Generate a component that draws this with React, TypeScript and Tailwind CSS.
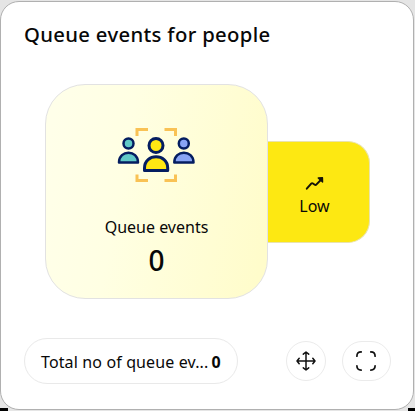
import React from "react";

function PeopleIcon() {
  return (
    <svg width="78" height="56" viewBox="117 127 78 56" fill="none" className="-ml-[2px] block">
      <g stroke="#f9c255" strokeWidth="3">
        <path d="M137 136V129.500H148M164.500 129.500H175.500V136M137 174.500V180.500H148M164.500 180.500H175.500V174.500" />
      </g>
      <g stroke="#041d60" strokeWidth="2.500" strokeLinejoin="round">
        <circle cx="128.500" cy="143.500" r="5" fill="#60c9c7" />
        <path d="M119 162.500C119 149.500 138 149.500 138 162.500Z" fill="#60c9c7" />
        <circle cx="183.800" cy="143.500" r="5" fill="#88a4f5" />
        <path d="M174.300 162.500C174.300 149.500 193.500 149.500 193.500 162.500Z" fill="#88a4f5" />
        <circle cx="156" cy="145.500" r="7" fill="#ffe713" strokeWidth="3" />
        <path d="M144.500 170.500V168C144.500 153 167.700 153 167.700 168V170.500Z" fill="#ffe713" strokeWidth="3" />
      </g>
    </svg>
  );
}

function TrendIcon() {
  return (
    <svg width="20" height="16" viewBox="0 0 20 16" fill="none" stroke="#15130a" strokeWidth="2" strokeLinecap="round" strokeLinejoin="round">
      <path d="M1.800 13.700L6.200 8.700Q7 7.800 8 8.500L9.700 9.700Q10.700 10.300 11.500 9.400L17 3.800" />
      <path d="M13.200 3L17.500 2.700L17.600 7.100Z" fill="#15130a" strokeWidth="1.300" />
    </svg>
  );
}

function MoveIcon() {
  return (
    <svg width="20" height="20" viewBox="0 0 20 20" fill="none" stroke="#111" strokeWidth="1.500" strokeLinecap="round" strokeLinejoin="round">
      <path d="M10 1V19M1 10H19M7.300 3.200L10 1L12.700 3.200M7.300 16.800L10 19L12.700 16.800M3.200 7.300L1 10L3.200 12.700M16.800 7.300L19 10L16.800 12.700" />
    </svg>
  );
}

function ExpandIcon() {
  return (
    <svg width="20" height="20" viewBox="0 0 20 20" fill="none" stroke="#111" strokeWidth="1.700" strokeLinecap="round" className="-ml-[2px]">
      <path d="M.9 5.200Q.9 .9 5.200 .9M14.800 .9Q19.100 .9 19.100 5.200M19.100 14.800Q19.100 19.100 14.800 19.100M5.200 19.100Q.9 19.100 .9 14.800" />
    </svg>
  );
}

export default function App() {
  return (
    <div className="h-[411px] w-[415px] overflow-hidden bg-[linear-gradient(to_right,#000_8px,#e5e5e5_8px,#e5e5e5_408px,#000_408px)] bg-[length:415px_3px] bg-bottom bg-no-repeat font-['Noto_Sans',sans-serif] text-[#080808]">
      <div className="h-[408px] bg-[#e5e5e5] pt-px">
        <main className="flex h-[409px] w-[414px] flex-col rounded-[19px] border border-[#b0b0b0] bg-white pl-[23px]">
          <h1 className="mt-[18px] h-7 text-[20.300px] leading-7 font-medium tracking-[0.330px] whitespace-nowrap">Queue events for people</h1>
          <section className="mt-[36px] ml-[21px] flex items-center">
            <div className="flex h-[215px] w-[223px] flex-col items-center rounded-[40px] border border-[#e2e2e2] bg-[linear-gradient(100deg,#ffffe9_5%,#ffffe3_35%,#fffccb_95%)] pt-[42px]">
              <PeopleIcon />
              <p className="mt-[32px] h-6 text-base leading-6 whitespace-nowrap">Queue events</p>
              <p className="mt-px h-10 text-[28px] leading-10 font-medium">0</p>
            </div>
            <div className="flex h-[102px] w-[102px] flex-col items-center rounded-r-[22px] border border-l-0 border-[#e9e3ad] bg-[#fde812] pt-[33px] pr-[8px]">
              <TrendIcon />
              <p className="mt-[3px] h-6 text-base leading-6">Low</p>
            </div>
          </section>
          <footer className="mt-[39px] flex h-[46px] items-center">
            <div className="flex h-[46px] w-[214px] items-center rounded-full border border-[#e9e9e9] pt-px pl-4 text-base whitespace-nowrap">
              <span className="tracking-[0.13px]">Total no of queue ev...</span>
              <span className="ml-[3px] font-bold">0</span>
            </div>
            <button className="ml-12 flex size-10 items-center justify-center rounded-full border border-[#ebebeb]" aria-label="Move">
              <MoveIcon />
            </button>
            <button className="ml-4 flex h-10 w-[49px] items-center justify-center rounded-full border border-[#ebebeb]" aria-label="Expand">
              <ExpandIcon />
            </button>
          </footer>
        </main>
      </div>
    </div>
  );
}
